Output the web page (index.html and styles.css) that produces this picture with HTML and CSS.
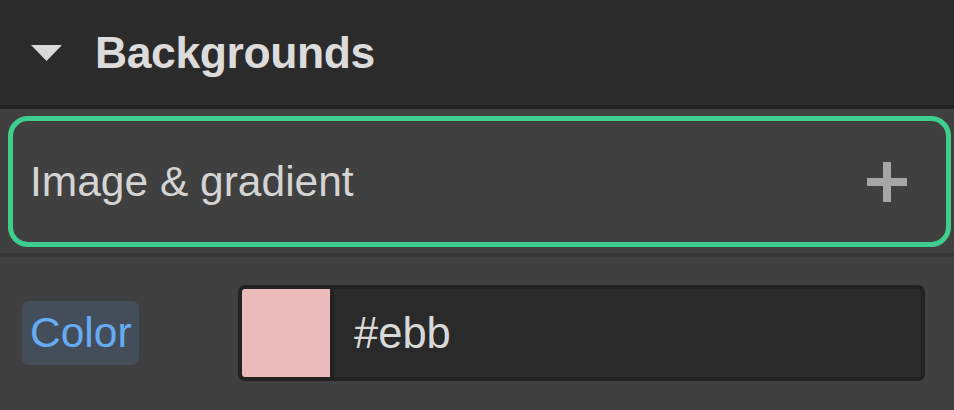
FILE: index.html
```html
<!DOCTYPE html>
<html>
<head>
<meta charset="utf-8">
<link rel="stylesheet" href="styles.css">
</head>
<body>
<div class="panel">
  <div class="header">
    <svg class="caret" width="31" height="16" viewBox="0 0 31 16"><polygon points="0,0 31,0 15.5,16" fill="#d9d9d9"/></svg>
    <span class="title">Backgrounds</span>
  </div>
  <div class="divider"></div>
  <div class="layers">
    <div class="layer-box">
      <span class="layer-label">Image &amp; gradient</span>
      <svg class="plus" width="40" height="40" viewBox="0 0 40 40"><rect x="16" y="0" width="8" height="40" fill="#a6a6a6"/><rect x="0" y="16" width="40" height="8" fill="#a6a6a6"/></svg>
    </div>
  </div>
  <div class="divider light"></div>
  <div class="color-row">
    <div class="color-label-wrap"><span class="color-label">Color</span></div>
    <div class="color-input">
      <div class="swatch"></div>
      <span class="color-value">#ebb</span>
    </div>
  </div>
</div>
</body>
</html>
```
FILE: styles.css
```css
html, body {
  margin: 0;
  padding: 0;
  background: #404040;
  font-family: "Liberation Sans", Arial, sans-serif;
}
.panel {
  width: 954px;
  height: 410px;
  overflow: hidden;
}
.header {
  height: 105px;
  background: #2b2b2b;
  display: flex;
  align-items: center;
  padding-left: 31px;
  gap: 33px;
}
.caret {
  display: block;
  margin-top: 1px;
}
.title {
  color: #dcdcdc;
  font-weight: 700;
  font-size: 44.5px;
  letter-spacing: -0.4px;
}
.divider {
  height: 4px;
  background: #222222;
}
.divider.light {
  background: #363636;
}
.layers {
  padding: 7px 3px 6px 8px;
}
.layer-box {
  box-sizing: border-box;
  height: 131px;
  border: 5px solid #3ecf8e;
  border-radius: 20px;
  display: flex;
  align-items: center;
  justify-content: space-between;
  padding: 0 39px 0 17px;
}
.layer-label {
  color: #d4d4d4;
  font-size: 42.5px;
}
.plus {
  display: block;
}
.color-row {
  display: flex;
  align-items: center;
  padding: 28px 29px 0 22px;
}
.color-label-wrap {
  width: 216px;
}
.color-label {
  display: inline-block;
  background: #444e5a;
  color: #66acf5;
  font-size: 42.5px;
  line-height: 64px;
  height: 64px;
  padding: 0 7px 0 8px;
  border-radius: 7px;
}
.color-input {
  flex: 1;
  box-sizing: border-box;
  height: 96px;
  border: 4px solid #222222;
  border-radius: 7px;
  background: #2a2a2a;
  display: flex;
  align-items: center;
}
.swatch {
  width: 88px;
  height: 88px;
  background: #ebbbbb;
  border-right: 4px solid #222222;
  border-radius: 3px 0 0 3px;
}
.color-value {
  color: #d9d9d9;
  font-size: 43.5px;
  margin-left: 20px;
}
```
